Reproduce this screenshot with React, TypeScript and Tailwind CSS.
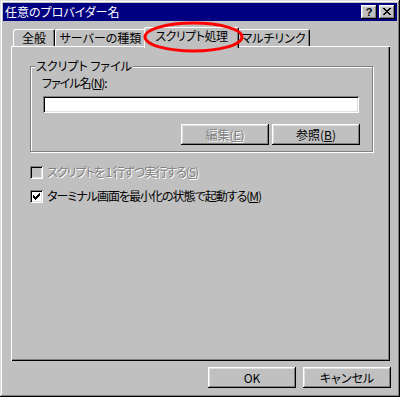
import React from "react";

const font = "[font-family:'Noto_Sans_CJK_JP','Noto_Sans',sans-serif] [font-feature-settings:'palt']";
const raised =
  "shadow-[inset_-1px_-1px_0_#000,inset_1px_1px_0_#fff,inset_-2px_-2px_0_#808080,inset_2px_2px_0_#dfdfdf]";
const sunken =
  "shadow-[inset_1px_1px_0_#808080,inset_-1px_-1px_0_#fff,inset_2px_2px_0_#000,inset_-2px_-2px_0_#dfdfdf]";
const tabShadow =
  "shadow-[inset_1px_1px_0_#fff,inset_-1px_0_0_#000,inset_-2px_0_0_#808080]";
const disabledText = "text-[#808080] [text-shadow:1px_1px_0_#fff]";

function Tab({ label, w, selected }: { label: string; w: string; selected?: boolean }) {
  if (selected) {
    return (
      <div
        className={`relative z-10 -mx-[2px] mb-[-2px] flex h-[21px] w-[95px] items-start justify-center rounded-t-[2px] bg-[#c0c0c0] pt-[2px] text-[12px] leading-[14px] tracking-[-0.5px] ${tabShadow}`}
      >
        {label}
      </div>
    );
  }
  return (
    <div
      className={`flex h-[17px] items-start justify-center rounded-t-[2px] bg-[#c0c0c0] pt-[2px] text-[12px] leading-[14px] ${tabShadow} ${w}`}
    >
      {label}
    </div>
  );
}

function Btn({ children, disabled, w }: { children: React.ReactNode; disabled?: boolean; w: string }) {
  return (
    <div
      className={`flex h-[21px] items-center justify-center bg-[#c0c0c0] text-[12px] leading-[14px] ${raised} ${w} ${
        disabled ? disabledText : "text-black"
      }`}
    >
      {children}
    </div>
  );
}

export default function App() {
  return (
    <div
      className={`relative h-[397px] w-[400px] overflow-hidden bg-[#c0c0c0] p-[3px] text-black ${font} shadow-[inset_-1px_-1px_0_#000,inset_1px_1px_0_#dfdfdf,inset_-2px_-2px_0_#808080,inset_2px_2px_0_#fff]`}
    >
      {/* Title bar */}
      <div className="flex h-[18px] items-center justify-between bg-[#000080] pl-[2px] pr-[2px]">
        <span className="text-[12px] leading-[16px] text-white">任意のプロバイダー名</span>
        <div className="flex items-center gap-[2px]">
          <div className={`flex h-[14px] w-[16px] items-center justify-center bg-[#c0c0c0] ${raised}`}>
            <span className="[font-family:'Liberation_Sans',sans-serif] text-[11px] font-bold leading-[11px] text-black">?</span>
          </div>
          <div className={`flex h-[14px] w-[16px] items-start justify-start bg-[#c0c0c0] ${raised}`}>
            <svg width="16" height="14" viewBox="0 0 16 14" shapeRendering="crispEdges">
              <path
                fill="#000"
                d="M4 3h2v1H4zM10 3h2v1h-2zM5 4h2v1H5zM9 4h2v1H9zM6 5h4v1H6zM7 6h2v1H7zM6 7h4v1H6zM5 8h2v1H5zM9 8h2v1H9zM4 9h2v1H4zM10 9h2v1h-2z"
              />
            </svg>
          </div>
        </div>
      </div>

      {/* Body */}
      <div className="pl-[8px] pr-[7px]">
        {/* Tabs */}
        <div className="mt-[6px] flex h-[19px] items-end pl-[2px]">
          <Tab label="全般" w="w-[42px]" />
          <Tab label="サーバーの種類" w="w-[91px]" />
          <Tab label="スクリプト処理" w="w-[95px]" selected />
          <Tab label="マルチリンク" w="w-[73px]" />
        </div>

        {/* Panel */}
        <div className="h-[315px] w-[379px] bg-[#c0c0c0] pl-[19px] pt-[20px] shadow-[inset_1px_1px_0_#fff,inset_-1px_-1px_0_#000,inset_-2px_-2px_0_#808080]">
          {/* Group box */}
          <div className="relative h-[86px] w-[343px] border border-[#808080] shadow-[1px_1px_0_#fff,inset_1px_1px_0_#fff]">
            <span className="absolute left-[4px] top-[-8px] bg-[#c0c0c0] px-[1px] text-[12px] leading-[14px]">
              スクリプト ファイル
            </span>
            <div className="ml-[11px] mt-[9px] text-[12px] leading-[13px] tracking-[-1px]">
              ファイル名(<span className="underline">N</span>):
            </div>
            <div className={`ml-[12px] mt-[7px] h-[17px] w-[316px] bg-white ${sunken}`} />
            <div className="mt-[11px] flex justify-end gap-[3px] pr-[12px]">
              <Btn w="w-[88px]" disabled>
                編集(<span className="underline">E</span>)
              </Btn>
              <Btn w="w-[88px]">
                参照(<span className="underline">B</span>)
              </Btn>
            </div>
          </div>

          {/* Checkboxes */}
          <div className="mt-[13px] flex items-center">
            <div className={`h-[13px] w-[13px] bg-[#c0c0c0] ${sunken}`} />
            <span className={`ml-[4px] text-[12px] leading-[14px] tracking-[-1px] ${disabledText}`}>
              スクリプトを 1 行ずつ実行する(<span className="underline">S</span>)
            </span>
          </div>
          <div className="mt-[10px] flex items-center">
            <div className={`h-[13px] w-[13px] bg-white ${sunken}`}>
              <svg width="13" height="13" viewBox="0 0 13 13" shapeRendering="crispEdges">
                <path
                  fill="#000"
                  d="M9 3h1v1H9zM8 4h2v1H8zM3 5h1v1H3zM7 5h3v1H7zM3 6h2v1H3zM6 6h3v1H6zM3 7h5v1H3zM4 8h3v1H4zM5 9h1v1H5z"
                />
              </svg>
            </div>
            <span className="ml-[4px] text-[12px] leading-[14px] tracking-[-1px]">
              ターミナル画面を最小化の状態で起動する(<span className="underline">M</span>)
            </span>
          </div>
        </div>

        {/* Bottom buttons */}
        <div className="mr-[-1px] mt-[6px] flex justify-end gap-[7px]">
          <Btn w="w-[88px]">OK</Btn>
          <Btn w="w-[88px]">キャンセル</Btn>
        </div>
      </div>

      {/* Red annotation ellipse */}
      <svg className="pointer-events-none absolute left-[143px] top-[21px] z-20" width="101" height="32" viewBox="0 0 101 32">
        <ellipse cx="50.5" cy="16" rx="48.5" ry="14" fill="none" stroke="#ff0000" strokeWidth="3" />
      </svg>
    </div>
  );
}
